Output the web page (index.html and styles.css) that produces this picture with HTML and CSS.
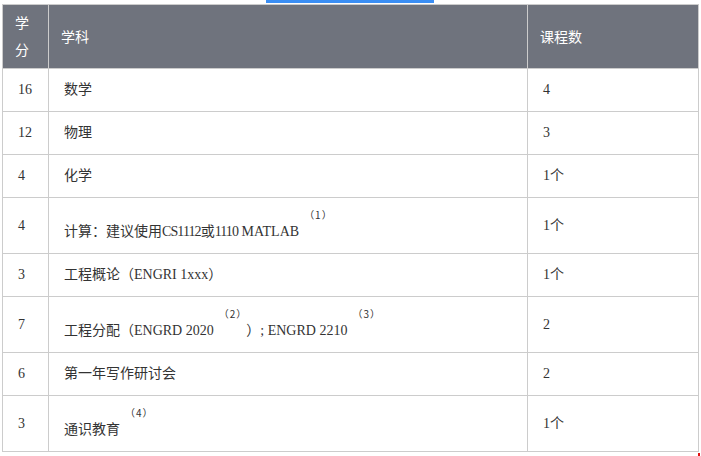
FILE: index.html
```html
<!DOCTYPE html>
<html lang="zh">
<head>
<meta charset="utf-8">
<title>课程表</title>
<link rel="stylesheet" href="styles.css">
</head>
<body>
<div class="page">
  <div class="tabbar"><span class="tab-indicator"></span></div>
  <table class="credits">
    <colgroup>
      <col class="c1">
      <col class="c2">
      <col class="c3">
    </colgroup>
    <thead>
      <tr><th>学分</th><th>学科</th><th>课程数</th></tr>
    </thead>
    <tbody>
      <tr><td>16</td><td>数学</td><td>4</td></tr>
      <tr><td>12</td><td>物理</td><td>3</td></tr>
      <tr><td>4</td><td>化学</td><td>1个</td></tr>
      <tr class="tall"><td>4</td><td>计算：建议使用<span class="num">CS1112</span>或<span class="num">1110</span> MATLAB<sup>（1）</sup></td><td>1个</td></tr>
      <tr><td>3</td><td>工程概论（ENGRI 1xxx）</td><td>1个</td></tr>
      <tr class="tall"><td>7</td><td>工程分配（ENGRD 2020<sup>（2）</sup>）; ENGRD 2210<sup>（3）</sup></td><td>2</td></tr>
      <tr><td>6</td><td>第一年写作研讨会</td><td>2</td></tr>
      <tr class="tall"><td>3</td><td>通识教育<sup>（4）</sup></td><td>1个</td></tr>
    </tbody>
  </table>
  <span class="corner-mark"></span>
</div>
</body>
</html>
```
FILE: styles.css
```css
html, body {
  margin: 0;
  padding: 0;
  background: #ffffff;
}

.page {
  position: relative;
  width: 701px;
  height: 456px;
  overflow: hidden;
}

.tabbar {
  height: 3px;
  padding-left: 266px;
  margin-bottom: 1px;
}

.tab-indicator {
  display: block;
  width: 168px;
  height: 3px;
  background: #3a8ef4;
}

.credits {
  margin-left: 2px;
  width: 696px;
  table-layout: fixed;
  border-collapse: collapse;
  border: 1px solid #cccccc;
  font-family: "Liberation Serif", "Noto Sans CJK SC", serif;
  font-size: 14px;
  color: #333333;
}

.c1 { width: 46px; }
.c2 { width: 479px; }
.c3 { width: 171px; }

.credits th {
  background: #6f737d;
  color: #ffffff;
  font-family: "Noto Sans CJK SC", "Noto Sans", sans-serif;
  font-weight: normal;
  font-size: 14px;
  line-height: 27px;
  padding: 4px 12px 5px;
  text-align: left;
  vertical-align: middle;
  border: 1px solid #cccccc;
}

.credits td {
  border: 1px solid #cccccc;
  padding: 12px 15px;
  line-height: 18px;
  vertical-align: middle;
  text-align: left;
}

.num {
  letter-spacing: -0.9px;
}

.credits sup {
  font-family: "Noto Sans CJK SC", sans-serif;
  font-size: 10px;
  line-height: 10px;
  vertical-align: 17px;
  padding: 0 4px 0 5px;
  letter-spacing: 1px;
}

.corner-mark {
  position: absolute;
  left: 698px;
  top: 453px;
  width: 2px;
  height: 3px;
  background: #e01010;
}
```
